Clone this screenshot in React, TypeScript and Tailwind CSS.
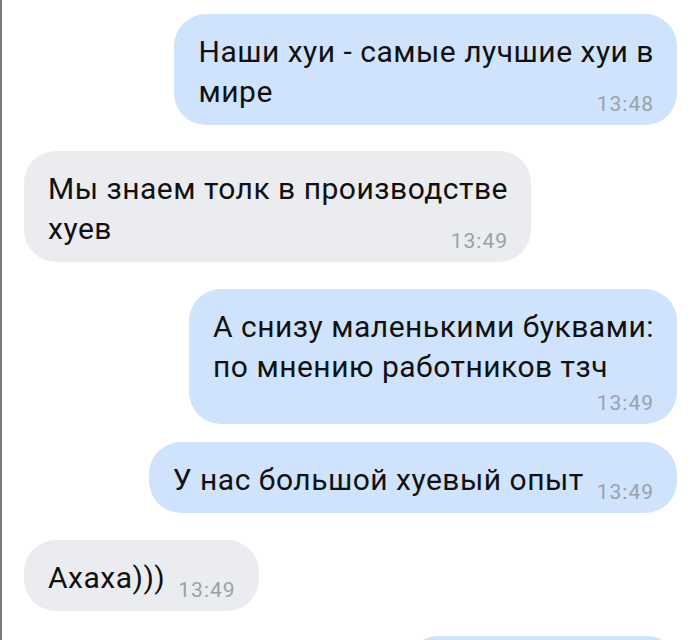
import React from 'react';

type Msg = {
  out: boolean;
  lines: string[];
  time: string;
  timeOwnLine?: boolean;
  mt: string;
};

const messages: Msg[] = [
  { out: true, lines: ['Наши хуи - самые лучшие хуи в', 'мире'], time: '13:48', mt: 'mt-[14px]' },
  { out: false, lines: ['Мы знаем толк в производстве', 'хуев'], time: '13:49', mt: 'mt-[26px]' },
  { out: true, lines: ['А снизу маленькими буквами:', 'по мнению работников тзч'], time: '13:49', timeOwnLine: true, mt: 'mt-[27px]' },
  { out: true, lines: ['У нас большой хуевый опыт'], time: '13:49', mt: 'mt-[18px]' },
  { out: false, lines: ['Ахаха)))'], time: '13:49', mt: 'mt-[27px]' },
];

const Time = ({ t }: { t: string }) => (
  <span className="text-[21px] leading-none text-[#9aa1aa] tracking-[1px] shrink-0">{t}</span>
);

const Bubble = ({ m }: { m: Msg }) => {
  const last = m.lines[m.lines.length - 1];
  const rest = m.lines.slice(0, -1);
  return (
    <div className={`flex ${m.out ? 'justify-end pr-[23px]' : 'justify-start pl-[22px]'} ${m.mt}`}>
      <div
        className={`${m.out ? 'bg-[#cfe3fc]' : 'bg-[#ebecf0]'} rounded-[32px] pl-[24px] pr-[23px] pt-[18px] pb-[10px] text-[30px] leading-[40px] text-[#111] tracking-[0.5px]`}
      >
        {rest.map((l) => (
          <div key={l} className="whitespace-nowrap">{l}</div>
        ))}
        {m.timeOwnLine ? (
          <>
            <div className="whitespace-nowrap">{last}</div>
            <div className="flex justify-end h-[27px] items-end">
              <Time t={m.time} />
            </div>
          </>
        ) : (
          <div className="flex items-end justify-between gap-[13px]">
            <span className="whitespace-nowrap pb-[3px]">{last}</span>
            <Time t={m.time} />
          </div>
        )}
      </div>
    </div>
  );
};

export default function App() {
  return (
    <div
      className="w-[700px] h-[640px] overflow-hidden bg-white border-l-2 border-[#7a7a7a] flex flex-col"
      style={{ fontFamily: 'Roboto, "Noto Sans", sans-serif' }}
    >
      {messages.map((m, i) => (
        <Bubble key={i} m={m} />
      ))}
      <div className="flex justify-end pr-[23px] mt-[25px]">
        <div className="bg-[#cfe3fc] rounded-[32px] w-[269px] h-[60px] shrink-0" />
      </div>
    </div>
  );
}
